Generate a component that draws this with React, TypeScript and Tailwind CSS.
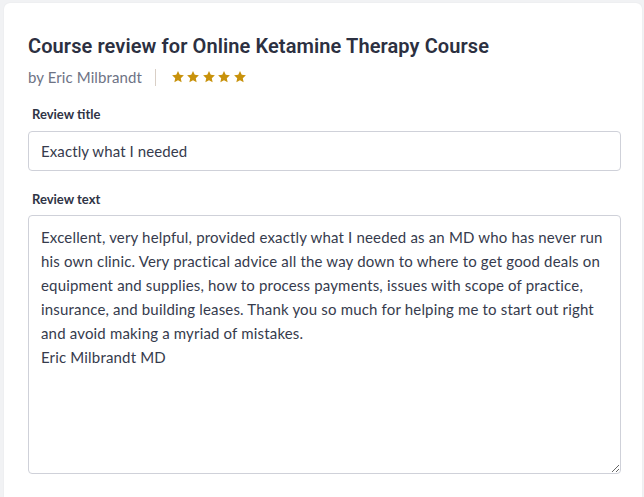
import { useState } from 'react';

const Star = () => (
  <svg viewBox="0 0 24 24" className="w-[14px] h-[14px]" fill="#c8920c">
    <path d="M12 1.8l3 6.5 7.1.8-5.3 4.9 1.4 7L12 17.5l-6.2 3.5 1.4-7-5.3-4.9 7.1-.8z" />
  </svg>
);

export default function App() {
  const [title, setTitle] = useState('Exactly what I needed');
  const [text, setText] = useState(
    'Excellent, very helpful, provided exactly what I needed as an MD who has never run his own clinic. Very practical advice all the way down to where to get good deals on equipment and supplies, how to process payments, issues with scope of practice, insurance, and building leases. Thank you so much for helping me to start out right and avoid making a myriad of mistakes.\nEric Milbrandt MD'
  );

  return (
    <div className="min-h-[497px] bg-[#f1f2f4] pt-[3px] pl-[4px] pr-[2px] font-['Lato',sans-serif]">
      <div className="bg-white rounded-t-md shadow-[0_0_2px_rgba(0,0,0,0.06)] min-h-[494px] pt-[29px] pl-[24px] pr-[21px]">
        <h1 className="text-[20px] leading-[28px] font-semibold text-[#2c3041] font-['Roboto',sans-serif] tracking-[0.1px]">
          Course review for Online Ketamine Therapy Course
        </h1>
        <div className="flex items-center mt-[6px] h-[22px]">
          <span className="text-[15px] text-[#6e7385] tracking-[0.1px]">by Eric Milbrandt</span>
          <span className="w-px h-[17px] bg-[#d9cfc6] ml-[13px] mr-[15px]" />
          <div className="flex gap-[1.5px]">
            <Star />
            <Star />
            <Star />
            <Star />
            <Star />
          </div>
        </div>

        <label className="block mt-[17px] text-[13px] font-bold text-[#2f3446] leading-[18px] pl-[4px]">
          Review title
        </label>
        <input
          value={title}
          onChange={(e) => setTitle(e.target.value)}
          className="mt-[8px] block w-full h-[40px] border border-[#cfd1d9] rounded-[4px] px-[12px] text-[15px] tracking-[0.1px] text-[#363b4d] outline-none"
        />

        <label className="block mt-[19px] text-[13px] font-bold text-[#2f3446] leading-[18px] pl-[4px]">
          Review text
        </label>
        <textarea
          value={text}
          onChange={(e) => setText(e.target.value)}
          className="mt-[7px] block w-full h-[259px] border border-[#cfd1d9] rounded-[4px] px-[12px] pt-[9px] pb-[11px] text-[15px] leading-[24px] tracking-[0.17px] text-[#363b4d] outline-none"
        />
      </div>
    </div>
  );
}
